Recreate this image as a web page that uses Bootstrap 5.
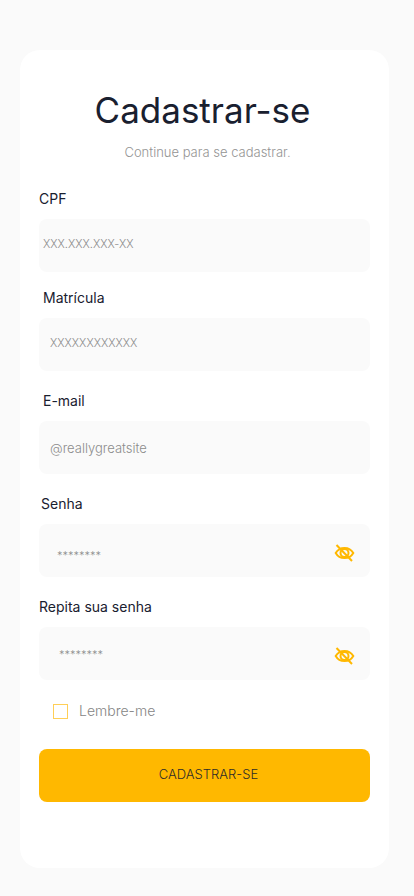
<!DOCTYPE html>
<html lang="pt-BR">
<head>
<meta charset="utf-8">
<meta name="viewport" content="width=device-width, initial-scale=1">
<title>Cadastrar-se</title>
<link href="https://cdn.jsdelivr.net/npm/bootstrap@5.3.0/dist/css/bootstrap.min.css" rel="stylesheet">
<style>
  body { background: #fafafa; color: #19202f; font-family: Inter, "Open Sans", sans-serif; }
  .signup { background: #fff; border-radius: 20px; margin: 50px 25px 28px 20px; padding: 40px 19px 66px; }
  .signup-title { font-size: 35px; line-height: 40px; font-weight: 400; padding-right: 4px; }
  .signup-sub { font-size: 13px; line-height: 20px; font-weight: 300; color: #949494; margin: 12px 0 27px; padding-left: 6px; }
  .field { margin-bottom: 20px; }
  .field-tight { margin-bottom: 16px; }
  .field-label { display: block; font-size: 14px; line-height: 20px; margin-bottom: 10px; }
  .inset { padding-left: 4px; }
  .inset-sm { padding-left: 2px; }
  .field-input, .field-input:focus { height: 53px; border: 0; border-radius: 8px; background: #fafafa; padding: 0 11px; font-size: 13px; font-weight: 300; color: #666; }
  .field-input::placeholder { color: #8c8c8c; opacity: 1; }
  .field-input.input-code { font-size: 11px; padding-bottom: 4px; }
  .field-input.input-cpf { padding-left: 4px; }
  .field-input.input-pass { font-size: 11px; padding: 10px 50px 0 18px; }
  .field-input.input-pass-again { font-size: 11px; padding: 2px 50px 0 20px; }
  .eye { right: 15px; line-height: 0; }
  .eye.btn { padding: 4px 0 0; }
  .form-check-input.check { width: 15px; height: 15px; margin: 0; border: 1px solid #ffcf57; border-radius: 0; }
  .form-check-input.check:checked { background-color: #ffb800; border-color: #ffb800; }
  .check-row { gap: 11px; padding-left: 14px; margin: 21px 0 28px; font-size: 14px; line-height: 20px; font-weight: 300; color: #858585; }
  .submit, .submit:hover { height: 53px; border: 0; border-radius: 8px; background: #ffb800; color: #2e2c28; font-size: 13px; font-weight: 300; padding: 0 0 2px 8px; }
</style>
</head>
<body>
<svg class="d-none" aria-hidden="true">
  <symbol id="eye-off" viewBox="0 0 20 18">
    <g fill="none" stroke="#ffb800" stroke-width="2">
      <path d="M1.2 9C3.200 5.500 6.300 3.900 10 3.900S16.800 5.500 18.800 9C16.800 12.500 13.700 14.100 10 14.100S3.200 12.500 1.200 9Z"/>
      <circle cx="10" cy="9" r="4"/>
      <path d="M2 1L17.500 17"/>
    </g>
  </symbol>
</svg>
<main class="signup">
  <h1 class="signup-title text-center mb-0">Cadastrar-se</h1>
  <p class="signup-sub text-center">Continue para se cadastrar.</p>
  <form>
    <div class="field-tight">
      <label class="field-label" for="cpf">CPF</label>
      <input class="form-control field-input input-code input-cpf" id="cpf" type="text" placeholder="XXX.XXX.XXX-XX">
    </div>
    <div class="field">
      <label class="field-label inset" for="matricula">Matrícula</label>
      <input class="form-control field-input input-code" id="matricula" type="text" placeholder="XXXXXXXXXXXX">
    </div>
    <div class="field">
      <label class="field-label inset" for="email">E-mail</label>
      <input class="form-control field-input" id="email" type="email" placeholder="@reallygreatsite">
    </div>
    <div class="field">
      <label class="field-label inset-sm" for="senha">Senha</label>
      <div class="position-relative">
        <input class="form-control field-input input-pass" id="senha" type="password" placeholder="********">
        <button class="eye btn border-0 position-absolute top-50 translate-middle-y" type="button" aria-label="Mostrar senha"><svg width="21" height="18"><use href="#eye-off"/></svg></button>
      </div>
    </div>
    <div>
      <label class="field-label" for="senha2">Repita sua senha</label>
      <div class="position-relative">
        <input class="form-control field-input input-pass-again" id="senha2" type="password" placeholder="********">
        <button class="eye btn border-0 position-absolute top-50 translate-middle-y" type="button" aria-label="Mostrar senha repetida"><svg width="21" height="18"><use href="#eye-off"/></svg></button>
      </div>
    </div>
    <div class="check-row d-flex align-items-center">
      <input class="form-check-input check" id="lembrar" type="checkbox">
      <label for="lembrar">Lembre-me</label>
    </div>
    <button class="submit btn w-100" type="submit">CADASTRAR-SE</button>
  </form>
</main>
<script src="https://cdn.jsdelivr.net/npm/bootstrap@5.3.0/dist/js/bootstrap.bundle.min.js"></script>
</body>
</html>
